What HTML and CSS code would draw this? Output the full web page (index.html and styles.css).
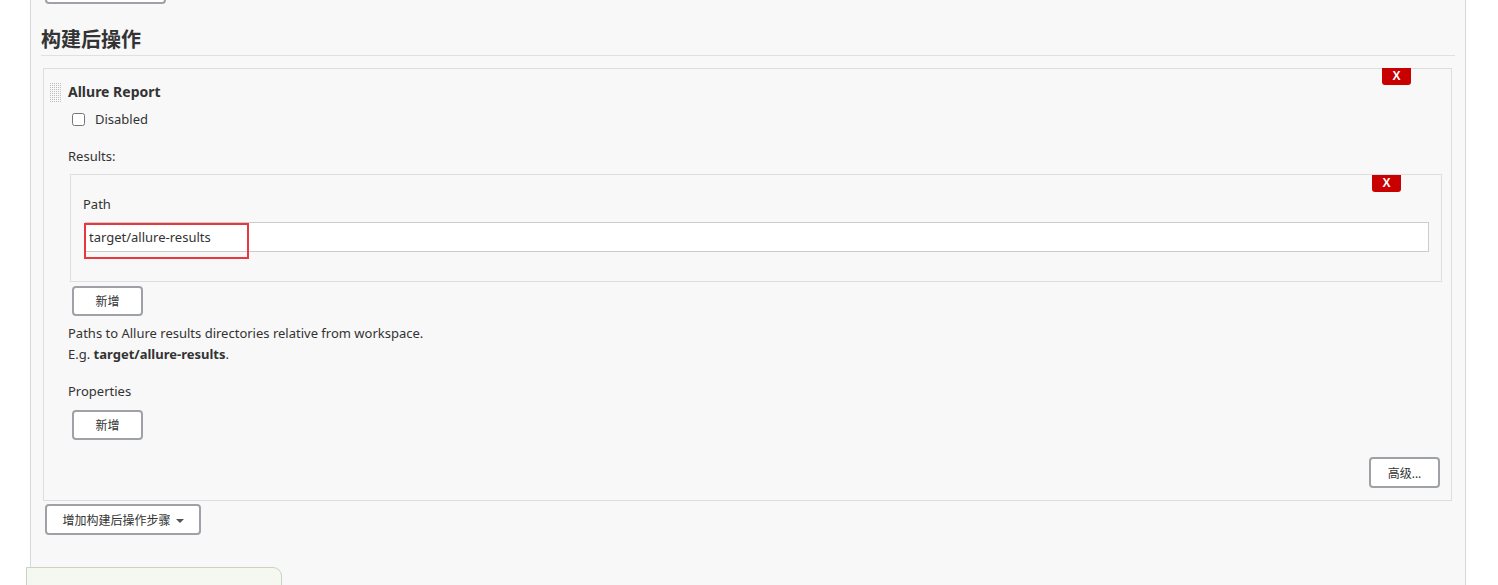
FILE: index.html
```html
<!DOCTYPE html>
<html lang="zh-CN">
<head>
    <meta charset="UTF-8">
    <title>构建后操作</title>
    <link rel="stylesheet" href="styles.css">
</head>
<body>

<div class="panel">
    <button class="btn top-btn"></button>

    <h2 class="section-title">构建后操作</h2>

    <div class="step">
        <span class="drag-handle"></span>
        <button class="btn-delete step-delete">X</button>

        <div class="step-name">Allure Report</div>
        <label class="check-row">
            <input type="checkbox">
            <span>Disabled</span>
        </label>

        <div class="field-label results-label">Results:</div>
        <div class="repeat">
            <button class="btn-delete repeat-delete">X</button>
            <div class="field-label">Path</div>
            <div class="input-wrap">
                <input type="text" class="text-input" value="target/allure-results">
                <span class="highlight"></span>
            </div>
        </div>
        <button class="btn small-btn add-btn">新增</button>

        <div class="help">
            Paths to Allure results directories relative from workspace.<br>
            E.g. <b>target/allure-results</b>.
        </div>

        <div class="field-label props-label">Properties</div>
        <button class="btn small-btn props-btn">新增</button>

        <div class="advanced-row">
            <button class="btn small-btn">高级...</button>
        </div>
    </div>

    <button class="btn add-step">增加构建后操作步骤 <span class="caret"></span></button>
</div>

<div class="bottom-bar"></div>

</body>
</html>
```

FILE: styles.css
```css
body {
    margin: 0;
    background: #fff;
    font-family: "Noto Sans", "Noto Sans CJK SC", sans-serif;
    font-size: 13px;
    color: #333;
    height: 585px;
    overflow: hidden;
    position: relative;
}
.panel {
    display: flow-root;
    margin-left: 30px;
    width: 1414px;
    height: 585px;
    padding: 0 10px;
    background: #f8f8f8;
    border-left: 1px solid #d8d8d8;
    border-right: 1px solid #d8d8d8;
}
.btn {
    display: block;
    background: #fff;
    border: 2px solid #9ea2a7;
    border-radius: 4px;
    font-family: "Noto Sans", "Noto Sans CJK SC", sans-serif;
    font-size: 12px;
    color: #333;
    padding: 0;
    cursor: pointer;
}
.top-btn {
    width: 121px;
    height: 30px;
    margin: -26px 0 0 4px;
}
.section-title {
    margin: 21px 0 0;
    font-size: 20px;
    line-height: 30px;
    font-weight: bold;
    color: #333;
    border-bottom: 1px solid #e0e0e0;
}
.step {
    position: relative;
    margin: 12px 3px 0 2px;
    padding: 13px 0 12px 24px;
    border: 1px solid #dedede;
}
.drag-handle {
    position: absolute;
    left: 5px;
    top: 13px;
    width: 12px;
    height: 20px;
    background-image:
        linear-gradient(90deg, #f8f8f8 1px, transparent 1px),
        linear-gradient(#f8f8f8 1px, #bdbdbd 1px);
    background-size: 2px 2px;
}
.btn-delete {
    position: absolute;
    width: 29px;
    height: 17px;
    padding: 0;
    border: none;
    border-radius: 0 0 3px 3px;
    background: #c90000;
    color: #fff;
    font-family: "Liberation Sans", sans-serif;
    font-weight: bold;
    font-size: 12px;
    line-height: 17px;
}
.step-delete {
    top: -1px;
    right: 40px;
}
.repeat-delete {
    top: 0;
    right: 40px;
}
.step-name {
    font-weight: bold;
    font-size: 14px;
    line-height: 20px;
}
.check-row {
    display: flex;
    align-items: center;
    height: 20px;
    margin-top: 7px;
}
.check-row input {
    width: 13px;
    height: 13px;
    margin: 0 10px 0 4px;
}
.field-label {
    line-height: 20px;
}
.results-label {
    margin-top: 17px;
}
.repeat {
    position: relative;
    margin: 8px 9px 0 2px;
    padding: 19px 12px 29px 12px;
    border: 1px solid #dedede;
}
.input-wrap {
    position: relative;
    margin: 8px 0 0 2px;
}
.text-input {
    display: block;
    box-sizing: border-box;
    width: 100%;
    height: 30px;
    border: 1px solid #ccc;
    padding: 0 3px;
    font-family: "Noto Sans", "Noto Sans CJK SC", sans-serif;
    font-size: 13px;
    color: #333;
    background: #fff;
}
.highlight {
    position: absolute;
    left: -1px;
    top: 1px;
    width: 161px;
    height: 32px;
    border: 2px solid #e8383d;
}
.small-btn {
    width: 71px;
    height: 30px;
}
.add-btn {
    margin: 4px 0 0 4px;
}
.help {
    margin-top: 7px;
    line-height: 21px;
}
.props-label {
    margin-top: 16px;
}
.props-btn {
    margin: 9px 0 0 4px;
}
.advanced-row {
    display: flex;
    justify-content: flex-end;
    margin: 17px 11px 0 0;
}
.advanced-row .btn {
    height: 31px;
}
.add-step {
    margin: 3px 0 0 4px;
    width: 156px;
    height: 31px;
}
.caret {
    display: inline-block;
    width: 0;
    height: 0;
    margin-left: 2px;
    vertical-align: 2px;
    border-left: 4px solid transparent;
    border-right: 4px solid transparent;
    border-top: 4px solid #555;
}
.bottom-bar {
    position: absolute;
    left: 26px;
    top: 567px;
    width: 254px;
    height: 40px;
    background: #f5f8f0;
    border: 1px solid #c8d4c0;
    border-radius: 0 9px 0 0;
}
```
